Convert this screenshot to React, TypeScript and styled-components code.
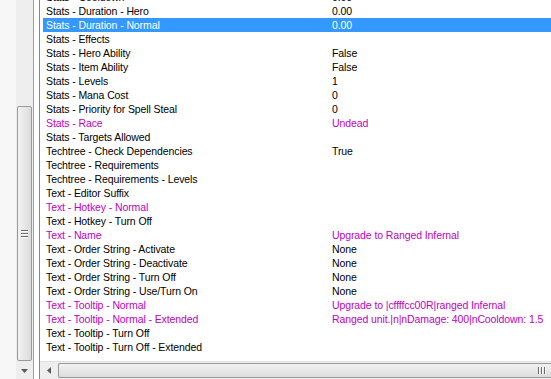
import React from 'react';
import styled, { createGlobalStyle } from 'styled-components';

const GlobalStyle = createGlobalStyle`
  html, body { margin: 0; padding: 0; background: #ffffff; }
  body { font-family: "Liberation Sans", Arial, sans-serif; font-size: 10.5px; letter-spacing: -0.1px; }
`;

const Frame = styled.div`
  display: flex;
  width: 551px;
  height: 379px;
  overflow: hidden;
  background: #ffffff;
`;

const TreePane = styled.div`
  width: 33px;
  display: flex;
  justify-content: flex-end;
  background: #f7f7f7;
  border-right: 1px solid #a0a0a0;
`;

const VScroll = styled.div`
  width: 17px;
  display: flex;
  flex-direction: column;
  background: #eeeeee;
`;

const VTrack = styled.div`
  flex: 1;
  display: flex;
  flex-direction: column;
  padding: 106px 1px 2px 1px;
`;

const VThumb = styled.div`
  flex: 1;
  display: flex;
  align-items: center;
  justify-content: center;
  border: 1px solid #999999;
  border-radius: 2px;
  background: linear-gradient(to right, #f2f2f2, #dcdcdc);
`;

const Grip = styled.div<{ $vertical?: boolean }>`
  display: flex;
  flex-direction: ${(p) => (p.$vertical ? 'row' : 'column')};
  gap: 1px;
  & > span {
    display: block;
    background: #6a6a6a;
    width: ${(p) => (p.$vertical ? '1px' : '7px')};
    height: ${(p) => (p.$vertical ? '7px' : '1px')};
    border-${(p) => (p.$vertical ? 'right' : 'bottom')}: 1px solid #ffffff;
  }
`;

const ArrowBox = styled.div`
  width: 17px;
  height: 16px;
  display: flex;
  align-items: center;
  justify-content: center;
  flex-shrink: 0;
`;

const Gap = styled.div`
  width: 5px;
  background: #ffffff;
  border-right: 1px solid #828790;
`;

const ListPane = styled.div`
  flex: 1;
  display: flex;
  flex-direction: column;
  min-width: 0;
`;

const Rows = styled.div`
  flex: 1;
  overflow: hidden;
`;

const RowList = styled.div`
  margin-top: -10px;
`;

const Row = styled.div<{ $selected?: boolean; $modified?: boolean }>`
  display: grid;
  grid-template-columns: 286px 1fr;
  height: 14px;
  line-height: 14px;
  margin-left: 3px;
  padding-left: 3px;
  white-space: nowrap;
  overflow: hidden;
  background: ${(p) => (p.$selected ? '#3399ff' : 'transparent')};
  color: ${(p) => (p.$selected ? '#ffffff' : p.$modified ? '#c000c0' : '#000000')};
`;

const HScroll = styled.div`
  height: 17px;
  display: flex;
  align-items: stretch;
  background: #eeeeee;
  border-top: 1px solid #e2e2e2;
`;

const HTrack = styled.div`
  flex: 1;
  display: flex;
  padding: 1px 0 1px 1px;
`;

const HThumb = styled.div`
  flex: 1;
  display: flex;
  align-items: center;
  justify-content: flex-end;
  padding-right: 5px;
  border: 1px solid #999999;
  border-right: none;
  border-radius: 2px 0 0 2px;
  background: linear-gradient(to bottom, #f2f2f2, #dcdcdc);
`;

type Field = { name: string; value?: string; modified?: boolean; selected?: boolean };

const fields: Field[] = [
  { name: 'Stats - Cooldown', value: '0.00' },
  { name: 'Stats - Duration - Hero', value: '0.00' },
  { name: 'Stats - Duration - Normal', value: '0.00', selected: true },
  { name: 'Stats - Effects' },
  { name: 'Stats - Hero Ability', value: 'False' },
  { name: 'Stats - Item Ability', value: 'False' },
  { name: 'Stats - Levels', value: '1' },
  { name: 'Stats - Mana Cost', value: '0' },
  { name: 'Stats - Priority for Spell Steal', value: '0' },
  { name: 'Stats - Race', value: 'Undead', modified: true },
  { name: 'Stats - Targets Allowed' },
  { name: 'Techtree - Check Dependencies', value: 'True' },
  { name: 'Techtree - Requirements' },
  { name: 'Techtree - Requirements - Levels' },
  { name: 'Text - Editor Suffix' },
  { name: 'Text - Hotkey - Normal', modified: true },
  { name: 'Text - Hotkey - Turn Off' },
  { name: 'Text - Name', value: 'Upgrade to Ranged Infernal', modified: true },
  { name: 'Text - Order String - Activate', value: 'None' },
  { name: 'Text - Order String - Deactivate', value: 'None' },
  { name: 'Text - Order String - Turn Off', value: 'None' },
  { name: 'Text - Order String - Use/Turn On', value: 'None' },
  { name: 'Text - Tooltip - Normal', value: 'Upgrade to |cffffcc00R|ranged Infernal', modified: true },
  { name: 'Text - Tooltip - Normal - Extended', value: 'Ranged unit.|n|nDamage: 400|nCooldown: 1.5', modified: true },
  { name: 'Text - Tooltip - Turn Off' },
  { name: 'Text - Tooltip - Turn Off - Extended' },
];

function PropertyList() {
  return (
    <Frame>
      <TreePane>
        <VScroll>
          <VTrack>
            <VThumb>
              <Grip>
                <span />
                <span />
                <span />
              </Grip>
            </VThumb>
          </VTrack>
          <ArrowBox>
            <svg width="7" height="4" viewBox="0 0 7 4">
              <path d="M0 0h7L3.5 4z" fill="#5a5a5a" />
            </svg>
          </ArrowBox>
        </VScroll>
      </TreePane>
      <Gap />
      <ListPane>
        <Rows>
          <RowList>
            {fields.map((f, i) => (
              <Row key={i} $selected={f.selected} $modified={f.modified}>
                <span>{f.name}</span>
                <span>{f.value ?? ''}</span>
              </Row>
            ))}
          </RowList>
        </Rows>
        <HScroll>
          <ArrowBox>
            <svg width="4" height="7" viewBox="0 0 4 7">
              <path d="M4 0v7L0 3.5z" fill="#5a5a5a" />
            </svg>
          </ArrowBox>
          <HTrack>
            <HThumb>
              <Grip $vertical>
                <span />
                <span />
                <span />
              </Grip>
            </HThumb>
          </HTrack>
        </HScroll>
      </ListPane>
    </Frame>
  );
}

export default function App() {
  return (
    <>
      <GlobalStyle />
      <PropertyList />
    </>
  );
}
